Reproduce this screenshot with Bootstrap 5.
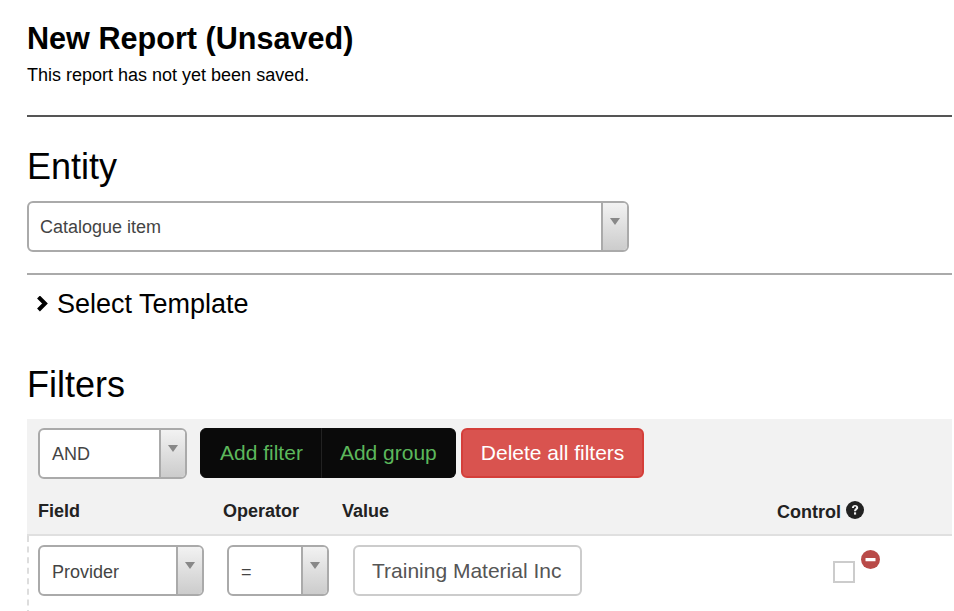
<!DOCTYPE html>
<html lang="en">
<head>
<meta charset="utf-8">
<title>New Report</title>
<link href="https://cdn.jsdelivr.net/npm/bootstrap@5.3.0/dist/css/bootstrap.min.css" rel="stylesheet">
<style>
html,body{height:611px;overflow:hidden;}
body{font-family:"Liberation Sans",Arial,sans-serif;color:#000;background:#fff;}
.page-wrap{padding:21px 2px 0 27px;}
.rep-title{font-size:30.600px;font-weight:700;line-height:34px;margin:0 0 11px 0;}
.rep-sub{font-size:18px;line-height:18px;margin:0 0 31px 0;}
.rule-dark{height:2px;background:#555;margin-bottom:26px;}
.sec-title{font-size:36px;font-weight:400;line-height:48px;margin:0 0 10px 0;}
.rule-light{height:2px;background:#aaa;margin:21px 0 11px;}
.tpl-row{font-size:27px;line-height:36px;margin-bottom:39px;padding-left:9px;gap:9px;}
.sel-box{height:51px;border:2px solid #aaa;border-radius:6px;background:#fff;color:#444;font-size:18px;}
.sel-text{flex:1;padding-left:12px;line-height:47px;padding-top:1px;}
.sel-arrow{width:26px;border-left:2px solid #aaa;border-radius:0 4px 4px 0;background:linear-gradient(#f2f2f2,#ccc);padding-top:15px;}
.sel-arrow i{display:block;width:0;height:0;margin:0 auto;border-style:solid;border-width:7px 5px 0;border-color:#888 transparent transparent;}
.w-entity{width:602px;}
.w-entity .sel-text{padding-left:11px;}
.w-and{width:149px;}
.w-prov{width:166px;}
.w-prov .sel-text,.w-op .sel-text{padding-top:2px;}
.w-op{width:102px;margin-left:23px;}
.filter-head{background:#f2f2f2;border-bottom:2px solid #e0e0e0;padding:9px 0 0 11px;height:117px;}
.act-row{gap:13px;align-items:flex-start;}
.act-group{gap:5px;}
.btn.act-btn{height:50px;font-size:21px;line-height:26px;padding:11px 18px;border-radius:6px;}
.btn.act-dark{background:#0a0a0a;border:1px solid #0a0a0a;color:#5cb85c;}
.btn.act-dark:first-child{padding-left:19px;}
.btn.act-dark + .act-dark{border-left-color:#222;}
.btn.act-del{background:#d9534f;border:2px solid #d43f3a;color:#fff;padding-top:10px;}
.col-labels{margin-top:22px;font-size:18px;font-weight:700;color:#222;line-height:20px;}
.lab-field{width:185px;}
.lab-op{width:119px;}
.lab-val{width:435px;}
.lab-ctrl{position:relative;top:-1px;}
.help-ic{margin-left:5px;position:relative;top:1px;vertical-align:baseline;}
.filter-row{border-left:2px dashed #ddd;padding:9px 0 0 9px;height:80px;}
.val-box{width:229px;height:51px;border:2px solid #ccc;border-radius:6px;margin-left:24px;padding:0 17px;color:#555;font-size:21px;line-height:47px;white-space:nowrap;}
.op-text{padding-left:12px;}
.chk-cell{margin-left:251px;padding-top:16px;position:relative;}
.chk-box{display:block;width:22px;height:22px;border:2px solid #ccc;background:#fff;}
.rm-ic{position:absolute;left:28px;top:5px;}
</style>
</head>
<body>
<div class="page-wrap">
  <h1 class="rep-title">New Report (Unsaved)</h1>
  <p class="rep-sub">This report has not yet been saved.</p>
  <div class="rule-dark"></div>

  <h2 class="sec-title">Entity</h2>
  <div class="sel-box w-entity d-flex">
    <span class="sel-text">Catalogue item</span>
    <span class="sel-arrow"><i></i></span>
  </div>
  <div class="rule-light"></div>
  <div class="tpl-row d-flex align-items-center">
    <svg width="12" height="16" viewBox="0 0 12 16" aria-hidden="true"><path d="M2.500 1 9 7.500 2.500 14" fill="none" stroke="#000" stroke-width="4"/></svg>
    <span>Select Template</span>
  </div>

  <h2 class="sec-title">Filters</h2>
  <div class="filter-head">
    <div class="act-row d-flex">
      <div class="sel-box w-and d-flex">
        <span class="sel-text">AND</span>
        <span class="sel-arrow"><i></i></span>
      </div>
      <div class="act-group d-flex">
        <div class="btn-group">
          <button type="button" class="btn act-btn act-dark">Add filter</button>
          <button type="button" class="btn act-btn act-dark">Add group</button>
        </div>
        <button type="button" class="btn act-btn act-del">Delete all filters</button>
      </div>
    </div>
    <div class="col-labels d-flex">
      <span class="lab-field">Field</span>
      <span class="lab-op">Operator</span>
      <span class="lab-val">Value</span>
      <span class="lab-ctrl">Control<svg class="help-ic" width="18" height="18" viewBox="0 0 18 18" aria-hidden="true"><circle cx="9" cy="9" r="9" fill="#222"/><path d="M5.900 7c0-2 1.400-3 3.200-3s3.100 1 3.100 2.700c0 2-2.200 2.100-2.200 3.600H8c0-2.600 2.100-2.500 2.100-3.700 0-.6-.4-1-1-1-.7 0-1.100.5-1.100 1.400z" fill="#f2f2f2"/><rect x="8" y="11.300" width="2.100" height="2.300" fill="#f2f2f2"/></svg></span>
    </div>
  </div>
  <div class="filter-row d-flex">
    <div class="sel-box w-prov d-flex">
      <span class="sel-text">Provider</span>
      <span class="sel-arrow"><i></i></span>
    </div>
    <div class="sel-box w-op d-flex">
      <span class="sel-text op-text">=</span>
      <span class="sel-arrow"><i></i></span>
    </div>
    <div class="val-box">Training Material Inc</div>
    <div class="chk-cell">
      <span class="chk-box"></span>
      <svg class="rm-ic" width="19" height="19" viewBox="0 0 19 19" aria-hidden="true"><circle cx="9.500" cy="9.500" r="9.500" fill="#b94a48"/><rect x="4.500" y="8" width="10" height="3.200" rx=".5" fill="#fff"/></svg>
    </div>
  </div>
</div>
</body>
</html>
